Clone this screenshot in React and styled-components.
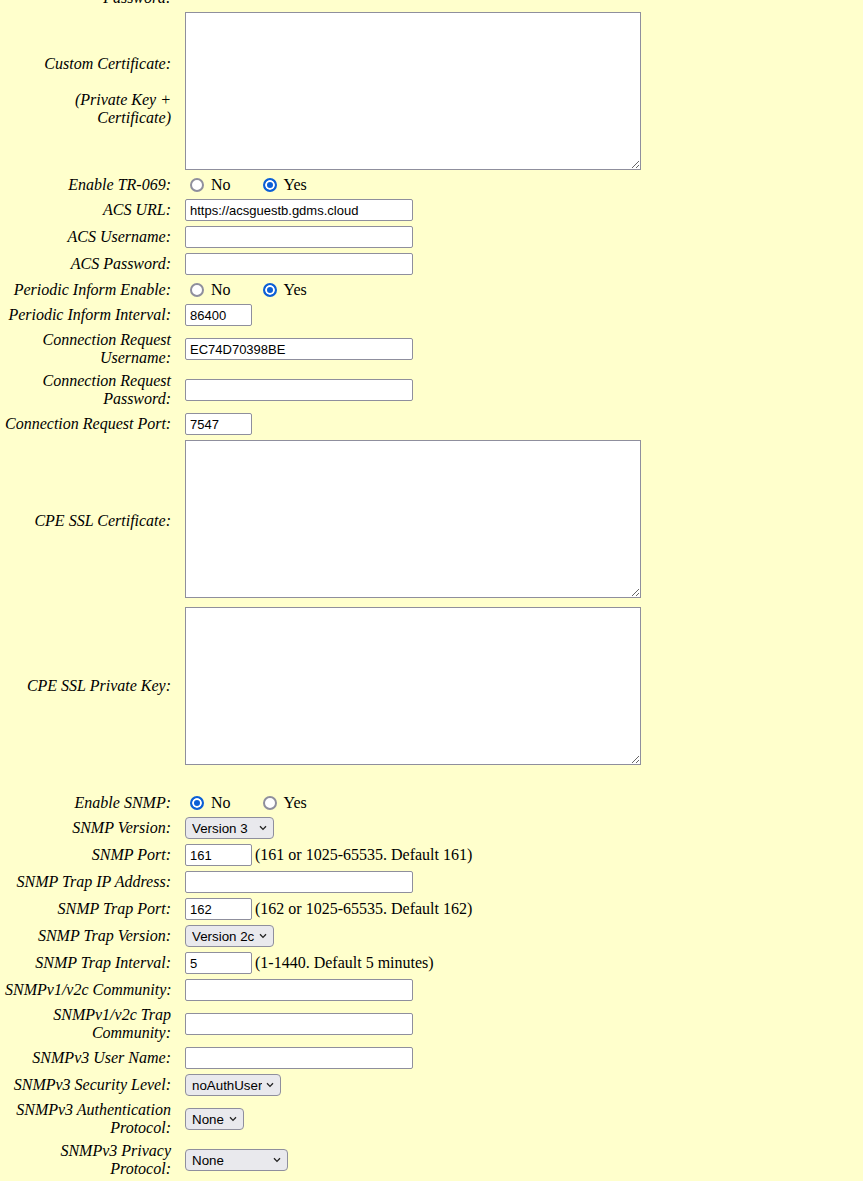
import React from 'react'
import styled, { createGlobalStyle } from 'styled-components'

const GlobalStyle = createGlobalStyle`
  html, body {
    margin: 0;
    background: #ffffcc;
  }
  body {
    overflow: hidden;
    font-family: "Liberation Serif", "Times New Roman", serif;
    color: #000;
  }
`

const Form = styled.div`
  display: grid;
  grid-template-columns: 166px 1fr;
  column-gap: 14px;
  row-gap: 5px;
  align-items: center;
  margin-top: -29px;
  padding-left: 5px;
`

const Label = styled.div`
  font-family: "Liberation Serif", "Times New Roman", serif;
  font-style: italic;
  font-size: 16px;
  line-height: 18px;
  text-align: right;
  white-space: nowrap;
`

const Field = styled.div`
  display: flex;
  align-items: center;
  gap: 3px;
  min-height: 19px;
`

const TextInput = styled.input`
  box-sizing: border-box;
  width: ${p => p.$w || 228}px;
  height: 22px;
  margin: 0;
  padding: 1px 3px 1px 4px;
  border: 1px solid #8f8f9d;
  border-radius: 2px;
  background: #fff;
  font-family: "Liberation Sans", Arial, sans-serif;
  font-size: 13px;
  color: #000;
  outline: none;
`

const TextArea = styled.textarea`
  box-sizing: border-box;
  display: block;
  width: 456px;
  height: 158px;
  margin: 0 0 ${p => (p.$tail ? 4 : 0)}px 0;
  padding: 2px;
  border: 1px solid #8f8f9d;
  background: #fff;
  font-family: "Liberation Mono", monospace;
  font-size: 13px;
  outline: none;
`

const SelectBox = styled.div`
  position: relative;
  width: ${p => p.$w}px;
  height: 22px;
`

const Select = styled.select`
  appearance: none;
  -webkit-appearance: none;
  box-sizing: border-box;
  width: 100%;
  height: 100%;
  margin: 0;
  padding: 0 18px 0 6px;
  border: 1px solid #8f8f9d;
  border-radius: 4px;
  background: #e9e9ed;
  font-family: "Liberation Sans", Arial, sans-serif;
  font-size: 13.33px;
  color: #000;
  outline: none;
`

const Chevron = styled.svg`
  position: absolute;
  right: 7px;
  top: 8px;
  width: 8px;
  height: 6px;
  pointer-events: none;
`

const Options = styled.div`
  display: flex;
  align-items: center;
  height: 19px;
  font-size: 16px;
`

const Option = styled.label`
  display: flex;
  align-items: center;
  margin-right: 27px;
  line-height: 18px;
`

const Radio = styled.input.attrs({ type: 'radio' })`
  appearance: none;
  -webkit-appearance: none;
  box-sizing: border-box;
  width: 14px;
  height: 14px;
  margin: 0 7px 0 5px;
  border: 2px solid #8f8f9d;
  border-radius: 50%;
  background: #fff;

  &:checked {
    border-color: #0b5fd6;
    background: #0b5fd6;
    box-shadow: inset 0 0 0 2px #fff;
  }
`

const Hint = styled.span`
  font-size: 16px;
  line-height: 18px;
  white-space: nowrap;
`

const Spacer = styled.div`
  grid-column: 1 / -1;
  height: 18px;
`

const Choice = ({ name, value }) => (
  <Options>
    <Option>
      <Radio name={name} defaultChecked={value === 'no'} />
      No
    </Option>
    <Option>
      <Radio name={name} defaultChecked={value === 'yes'} />
      Yes
    </Option>
  </Options>
)

const Dropdown = ({ w, value, options }) => (
  <SelectBox $w={w}>
    <Select defaultValue={value}>
      {options.map(o => (
        <option key={o}>{o}</option>
      ))}
    </Select>
    <Chevron viewBox="0 0 8 6">
      <path d="M1 1.2 L4 4.4 L7 1.2" fill="none" stroke="#222" strokeWidth="1.3" />
    </Chevron>
  </SelectBox>
)

const App = () => {
  return (
    <>
      <GlobalStyle />
      <Form>
        <Label>
          Custom Certificate
          <br />
          Password:
        </Label>
        <Field>
          <TextInput type="password" />
        </Field>

        <Label>
          Custom Certificate:
          <br />
          <br />
          (Private Key +
          <br />
          Certificate)
        </Label>
        <Field>
          <TextArea />
        </Field>

        <Label>Enable TR-069:</Label>
        <Choice name="tr069" value="yes" />

        <Label>ACS URL:</Label>
        <Field>
          <TextInput defaultValue="https://acsguestb.gdms.cloud" />
        </Field>

        <Label>ACS Username:</Label>
        <Field>
          <TextInput />
        </Field>

        <Label>ACS Password:</Label>
        <Field>
          <TextInput type="password" />
        </Field>

        <Label>Periodic Inform Enable:</Label>
        <Choice name="inform" value="yes" />

        <Label>Periodic Inform Interval:</Label>
        <Field>
          <TextInput $w={67} defaultValue="86400" />
        </Field>

        <Label>
          Connection Request
          <br />
          Username:
        </Label>
        <Field>
          <TextInput defaultValue="EC74D70398BE" />
        </Field>

        <Label>
          Connection Request
          <br />
          Password:
        </Label>
        <Field>
          <TextInput type="password" />
        </Field>

        <Label>Connection Request Port:</Label>
        <Field>
          <TextInput $w={67} defaultValue="7547" />
        </Field>

        <Label>CPE SSL Certificate:</Label>
        <Field>
          <TextArea $tail />
        </Field>

        <Label>CPE SSL Private Key:</Label>
        <Field>
          <TextArea />
        </Field>

        <Spacer />

        <Label>Enable SNMP:</Label>
        <Choice name="snmp" value="no" />

        <Label>SNMP Version:</Label>
        <Field>
          <Dropdown w={89} value="Version 3" options={['Version 1', 'Version 2c', 'Version 3']} />
        </Field>

        <Label>SNMP Port:</Label>
        <Field>
          <TextInput $w={67} defaultValue="161" />
          <Hint>(161 or 1025-65535. Default 161)</Hint>
        </Field>

        <Label>SNMP Trap IP Address:</Label>
        <Field>
          <TextInput />
        </Field>

        <Label>SNMP Trap Port:</Label>
        <Field>
          <TextInput $w={67} defaultValue="162" />
          <Hint>(162 or 1025-65535. Default 162)</Hint>
        </Field>

        <Label>SNMP Trap Version:</Label>
        <Field>
          <Dropdown w={89} value="Version 2c" options={['Version 1', 'Version 2c', 'Version 3']} />
        </Field>

        <Label>SNMP Trap Interval:</Label>
        <Field>
          <TextInput $w={67} defaultValue="5" />
          <Hint>(1-1440. Default 5 minutes)</Hint>
        </Field>

        <Label>SNMPv1/v2c Community:</Label>
        <Field>
          <TextInput />
        </Field>

        <Label>
          SNMPv1/v2c Trap
          <br />
          Community:
        </Label>
        <Field>
          <TextInput />
        </Field>

        <Label>SNMPv3 User Name:</Label>
        <Field>
          <TextInput />
        </Field>

        <Label>SNMPv3 Security Level:</Label>
        <Field>
          <Dropdown w={96} value="noAuthUser" options={['noAuthUser', 'authNoPriv', 'authPriv']} />
        </Field>

        <Label>
          SNMPv3 Authentication
          <br />
          Protocol:
        </Label>
        <Field>
          <Dropdown w={59} value="None" options={['None', 'MD5', 'SHA']} />
        </Field>

        <Label>
          SNMPv3 Privacy
          <br />
          Protocol:
        </Label>
        <Field>
          <Dropdown w={103} value="None" options={['None', 'AES/DES', 'AES', 'DES']} />
        </Field>
      </Form>
    </>
  )
}

export default App
